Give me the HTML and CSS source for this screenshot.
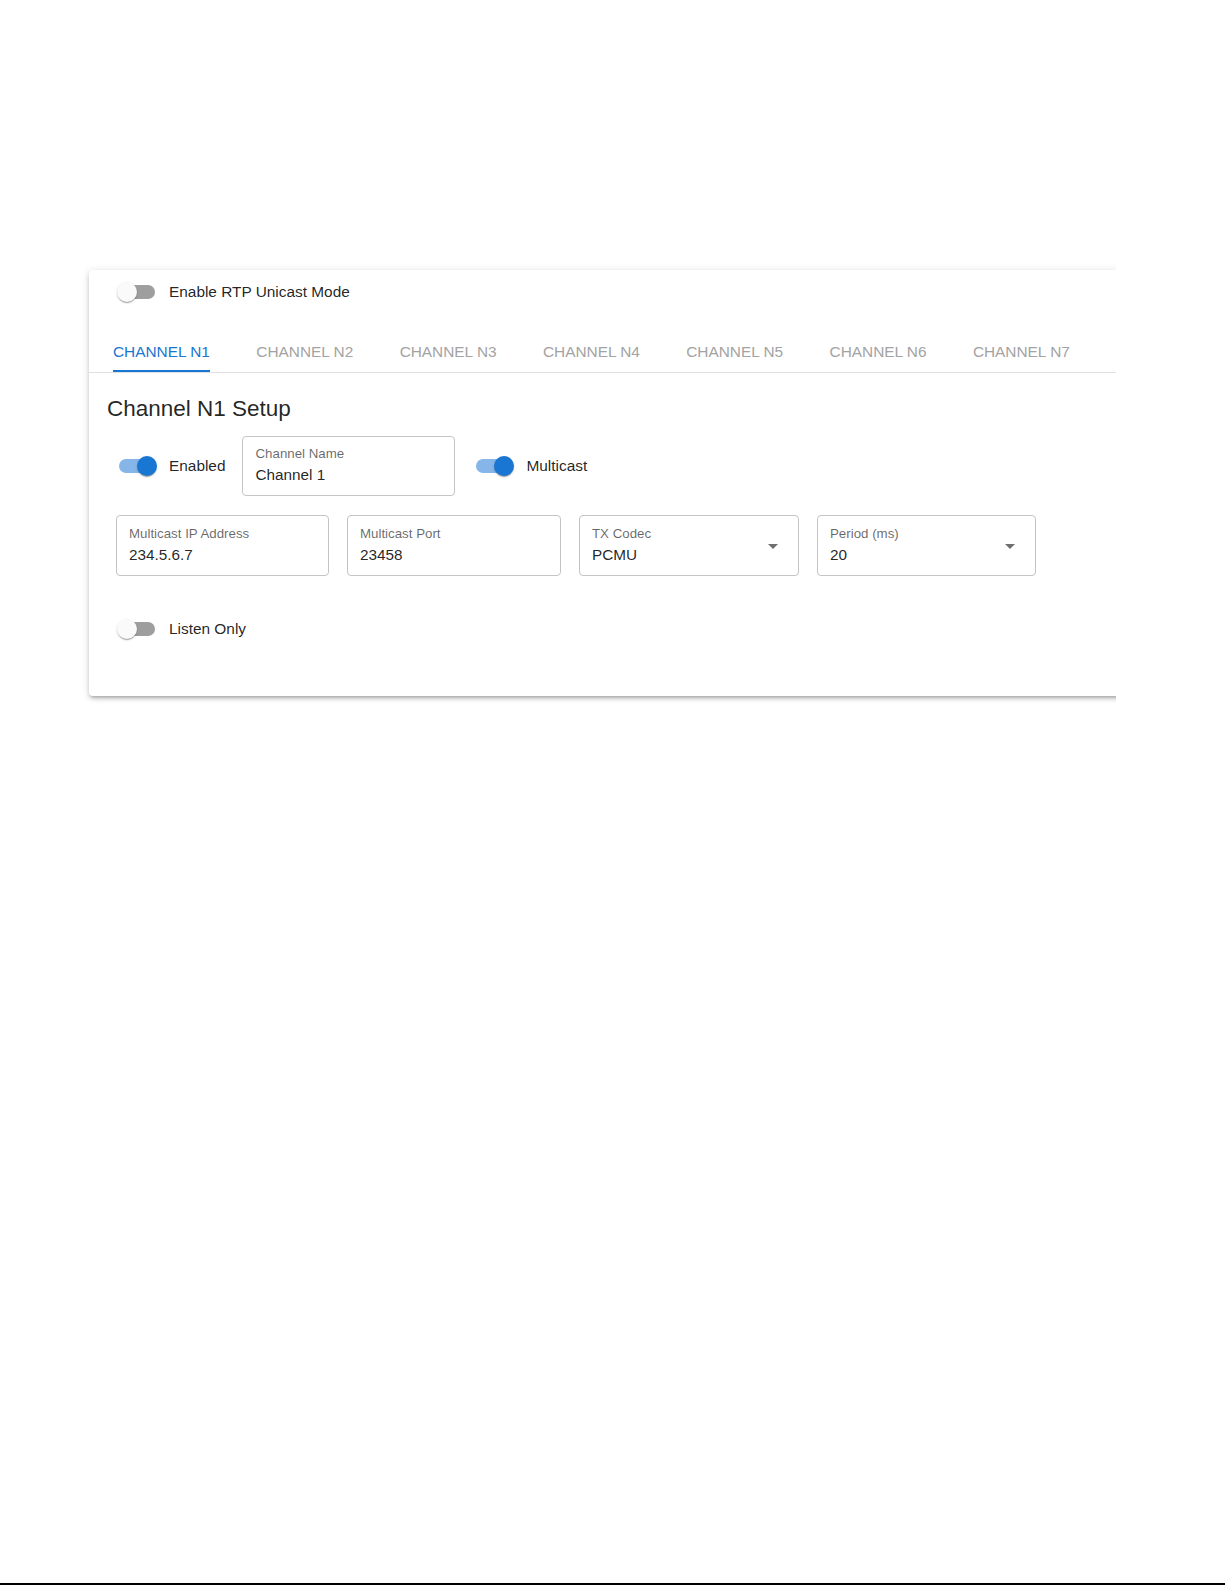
FILE: index.html
```html
<!DOCTYPE html>
<html>
<head>
<meta charset="utf-8">
<title>Channel Setup</title>
<link rel="stylesheet" href="styles.css">
</head>
<body>
<div class="page">
  <div class="clip">
    <div class="card">
      <div class="row rtp-row">
        <span class="switch"><span class="track"></span><span class="thumb"></span></span>
        <span class="switch-label">Enable RTP Unicast Mode</span>
      </div>

      <div class="tabs">
        <div class="tab active"><span class="tab-text">CHANNEL N1</span></div>
        <div class="tab"><span class="tab-text">CHANNEL N2</span></div>
        <div class="tab"><span class="tab-text">CHANNEL N3</span></div>
        <div class="tab"><span class="tab-text">CHANNEL N4</span></div>
        <div class="tab"><span class="tab-text">CHANNEL N5</span></div>
        <div class="tab"><span class="tab-text">CHANNEL N6</span></div>
        <div class="tab"><span class="tab-text">CHANNEL N7</span></div>
      </div>

      <h2 class="heading">Channel N1 Setup</h2>

      <div class="row row-a">
        <span class="switch on"><span class="track"></span><span class="thumb"></span></span>
        <span class="switch-label">Enabled</span>
        <div class="field field-name">
          <div class="field-body">
            <span class="field-label">Channel Name</span>
            <span class="field-value">Channel 1</span>
          </div>
        </div>
        <span class="switch on multicast-switch"><span class="track"></span><span class="thumb"></span></span>
        <span class="switch-label">Multicast</span>
      </div>

      <div class="row row-b">
        <div class="field w213">
          <div class="field-body">
            <span class="field-label">Multicast IP Address</span>
            <span class="field-value">234.5.6.7</span>
          </div>
        </div>
        <div class="field w214">
          <div class="field-body">
            <span class="field-label">Multicast Port</span>
            <span class="field-value">23458</span>
          </div>
        </div>
        <div class="field select w220">
          <div class="field-body">
            <span class="field-label">TX Codec</span>
            <span class="field-value">PCMU</span>
          </div>
          <span class="caret"></span>
        </div>
        <div class="field select w219">
          <div class="field-body">
            <span class="field-label">Period (ms)</span>
            <span class="field-value">20</span>
          </div>
          <span class="caret"></span>
        </div>
      </div>

      <div class="row listen-row">
        <span class="switch"><span class="track"></span><span class="thumb"></span></span>
        <span class="switch-label">Listen Only</span>
      </div>
    </div>
  </div>
</div>
</body>
</html>
```

FILE: styles.css
```css
* {
  box-sizing: border-box;
}

html, body {
  margin: 0;
  padding: 0;
  background: #ffffff;
}

body {
  font-family: "Liberation Sans", Arial, sans-serif;
  color: rgba(0, 0, 0, 0.87);
}

.page {
  height: 1585px;
  padding-top: 260px;
  padding-left: 80px;
  border-bottom: 2px solid #000;
}

.clip {
  width: 1036px;
  overflow: hidden;
  padding: 10px 0 12px 9px;
}

.card {
  width: 1200px;
  background: #fff;
  border-radius: 4px;
  box-shadow: 0px 3px 3px -2px rgba(0,0,0,0.2), 0px 3px 4px 0px rgba(0,0,0,0.14), 0px 1px 8px 0px rgba(0,0,0,0.12);
  padding-bottom: 47px;
}

.row {
  display: flex;
  align-items: center;
}

.rtp-row {
  height: 44px;
  padding-left: 28px;
}

/* Switch */
.switch {
  position: relative;
  display: inline-block;
  width: 40px;
  height: 22px;
  flex: none;
}

.switch .track {
  position: absolute;
  left: 2px;
  top: 4px;
  width: 36px;
  height: 14px;
  border-radius: 7px;
  background: #9e9e9e;
}

.switch .thumb {
  position: absolute;
  left: 0;
  top: 1px;
  width: 20px;
  height: 20px;
  border-radius: 50%;
  background: #fafafa;
  box-shadow: 0px 2px 1px -1px rgba(0,0,0,0.2), 0px 1px 1px 0px rgba(0,0,0,0.14), 0px 1px 3px 0px rgba(0,0,0,0.12);
}

.switch.on .track {
  background: #86b6e9;
}

.switch.on .thumb {
  left: 20px;
  background: #1976d2;
}

.switch-label {
  font-size: 15.4px;
  line-height: 18px;
  margin-left: 12px;
  color: rgba(0, 0, 0, 0.87);
  white-space: nowrap;
}

/* Tabs */
.tabs {
  display: flex;
  padding-top: 29px;
  border-bottom: 1px solid #e0e0e0;
}

.tab {
  padding: 0 23.2px;
  font-size: 15.4px;
  line-height: 18px;
  color: #a3a3a3;
  white-space: nowrap;
}

.tab:first-child {
  padding-left: 24px;
}

.tab-text {
  display: block;
  padding-bottom: 9px;
  border-bottom: 2px solid transparent;
}

.tab.active {
  color: #1976d2;
}

.tab.active .tab-text {
  border-bottom-color: #1976d2;
}

/* Heading */
.heading {
  margin: 23px 0 0 18px;
  font-size: 22.5px;
  line-height: 26px;
  font-weight: 400;
  color: rgba(0, 0, 0, 0.87);
}

/* Row A */
.row-a {
  margin-top: 14px;
  height: 60px;
  padding-left: 28px;
}

.field-name {
  margin-left: 17px;
  width: 213px;
  height: 60px;
}

.multicast-switch {
  margin-left: 19px;
}

/* Row B */
.row-b {
  margin-top: 19px;
  padding-left: 27px;
  gap: 18px;
}

.row-b .field {
  height: 61px;
}

.w213 { width: 213px; }
.w214 { width: 214px; }
.w220 { width: 220px; }
.w219 { width: 219px; }

.field {
  display: flex;
  align-items: center;
  border: 1px solid #c4c4c4;
  border-radius: 4px;
  padding: 0 12px;
  flex: none;
}

.field-body {
  display: flex;
  flex-direction: column;
  flex: 1;
  padding-bottom: 2px;
}

.field-label {
  font-size: 13.3px;
  line-height: 15px;
  color: rgba(0, 0, 0, 0.6);
  white-space: nowrap;
}

.field-value {
  margin-top: 5px;
  font-size: 15.3px;
  line-height: 18px;
  color: rgba(0, 0, 0, 0.87);
}

.field.select {
  padding-right: 20px;
}

.caret {
  flex: none;
  width: 0;
  height: 0;
  border-left: 5px solid transparent;
  border-right: 5px solid transparent;
  border-top: 5px solid #6f6f6f;
  margin-top: 2px;
}

/* Listen row */
.listen-row {
  margin-top: 33px;
  height: 40px;
  padding-left: 28px;
}
```
